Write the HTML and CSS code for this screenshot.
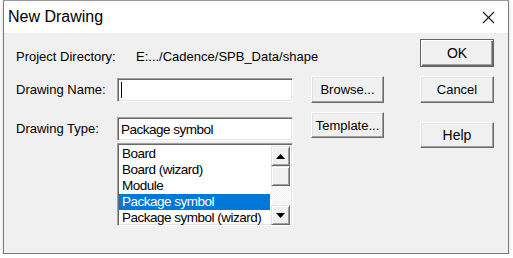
FILE: index.html
```html
<!DOCTYPE html>
<html lang="en">

<head>
    <meta charset="UTF-8">
    <meta name="viewport" content="width=device-width, initial-scale=1.0">
    <title>New Drawing</title>
    <link rel="stylesheet" href="styles.css">
</head>

<body>
    <div class="window">
        <div class="titlebar">
            <span class="title">New Drawing</span>
            <svg class="close" width="13" height="13" viewBox="0 0 13 13">
                <path d="M1 1 L12 12 M12 1 L1 12" stroke="#1a1a1a" stroke-width="1.1" fill="none" />
            </svg>
        </div>
        <div class="content">
            <div class="form">
                <div class="row dir">
                    <span class="label">Project Directory:</span>
                    <span class="value">E:.../Cadence/SPB_Data/shape</span>
                </div>
                <div class="row name">
                    <span class="label">Drawing Name:</span>
                    <div class="field"><span class="caret"></span></div>
                    <button class="btn side">Browse...</button>
                </div>
                <div class="row type">
                    <span class="label">Drawing Type:</span>
                    <div class="field">Package symbol</div>
                    <button class="btn side">Template...</button>
                </div>
                <div class="row list">
                    <div class="listbox">
                        <div class="items">
                            <div class="item">Board</div>
                            <div class="item">Board (wizard)</div>
                            <div class="item">Module</div>
                            <div class="item selected">Package symbol</div>
                            <div class="item">Package symbol (wizard)</div>
                        </div>
                        <div class="scrollbar">
                            <div class="arrow">
                                <svg width="9" height="5" viewBox="0 0 9 5"><path d="M4.5 0 L9 5 L0 5 Z" fill="#000" /></svg>
                            </div>
                            <div class="thumb"></div>
                            <div class="track"></div>
                            <div class="arrow">
                                <svg width="9" height="5" viewBox="0 0 9 5"><path d="M0 0 L9 0 L4.5 5 Z" fill="#000" /></svg>
                            </div>
                        </div>
                    </div>
                </div>
            </div>
            <div class="actions">
                <button class="btn ok">OK</button>
                <button class="btn cancel">Cancel</button>
                <button class="btn help">Help</button>
            </div>
        </div>
    </div>
</body>

</html>
```

FILE: styles.css
```css
body {
    margin: 0;
    background-color: #ffffff;
    font-family: "Liberation Sans", Arial, sans-serif;
}

.window {
    margin-left: 3px;
    width: 506px;
    height: 254px;
    box-sizing: border-box;
    border: 1px solid #7a7a7a;
    border-top-color: #9a9a9a;
    box-shadow: 0 2px 4px rgba(0, 0, 0, 0.18);
    display: flex;
    flex-direction: column;
}

.titlebar {
    height: 32px;
    background-color: #ffffff;
    display: flex;
    align-items: center;
    justify-content: space-between;
    padding-left: 4px;
    padding-right: 13px;
}

.title {
    font-size: 16px;
    color: #000000;
    padding-bottom: 1px;
}

.close {
    margin-top: 1px;
}

.content {
    flex: 1;
    background-color: #f0f0f0;
    display: flex;
    padding-left: 12px;
    font-size: 13px;
    color: #000000;
}

.form {
    width: 368px;
    padding-top: 15px;
}

.row {
    display: flex;
}

.label {
    width: 101px;
    flex-shrink: 0;
}

.dir {
    height: 16px;
    align-items: center;
}

.value {
    margin-left: 19px;
}

.name {
    margin-top: 12px;
    height: 27px;
    align-items: center;
}

.type {
    margin-top: 9px;
    height: 29px;
}

.type .label {
    align-self: flex-end;
    padding-bottom: 5px;
}

.type .field {
    align-self: flex-end;
}

.type .btn {
    align-self: flex-start;
    height: 26px;
}

.field {
    width: 176px;
    height: 24px;
    box-sizing: border-box;
    background-color: #ffffff;
    border: 1px solid;
    border-color: #a0a0a0 #ffffff #ffffff #a0a0a0;
    box-shadow: inset 1px 1px #696969, inset -1px -1px #e3e3e3;
    padding-left: 3px;
    display: flex;
    align-items: center;
    font-size: 13.5px;
    letter-spacing: -0.5px;
}

.caret {
    width: 1px;
    height: 16px;
    background-color: #000000;
    margin-left: 0px;
}

.btn {
    font-family: "Liberation Sans", Arial, sans-serif;
    font-size: 13px;
    color: #000000;
    background-color: #f0f0f0;
    border: 1px solid;
    border-color: #ffffff #696969 #696969 #ffffff;
    box-shadow: inset -1px -1px #a0a0a0, inset 1px 1px #e3e3e3;
    padding: 0;
    box-sizing: border-box;
}

.side {
    width: 73px;
    height: 27px;
    margin-left: 18px;
}

.list {
    margin-top: 2px;
    padding-left: 101px;
}

.listbox {
    width: 176px;
    height: 83px;
    box-sizing: border-box;
    background-color: #ffffff;
    border: 1px solid;
    border-color: #a0a0a0 #ffffff #ffffff #a0a0a0;
    box-shadow: inset 1px 1px #696969, inset -1px -1px #e3e3e3;
    padding: 2px 2px 0 1px;
    display: flex;
    overflow: hidden;
}

.items {
    flex: 1;
    overflow: hidden;
    font-size: 13.5px;
    letter-spacing: -0.5px;
}

.item {
    height: 16px;
    line-height: 16px;
    padding-left: 3px;
    white-space: nowrap;
}

.selected {
    background-color: #0078d7;
    color: #ffffff;
}

.scrollbar {
    width: 19px;
    display: flex;
    flex-direction: column;
    margin-left: 1px;
}

.arrow,
.thumb {
    box-sizing: border-box;
    background-color: #f0f0f0;
    border: 1px solid;
    border-color: #e3e3e3 #696969 #696969 #e3e3e3;
    box-shadow: inset 1px 1px #ffffff, inset -1px -1px #a0a0a0;
    display: flex;
    align-items: center;
    justify-content: center;
}

.arrow {
    height: 20px;
}

.thumb {
    height: 20px;
}

.track {
    flex: 1;
    background-image: repeating-conic-gradient(#f0f0f0 0 25%, #ffffff 0 50%);
    background-size: 2px 2px;
}

.actions {
    margin-left: 36px;
    padding-top: 6px;
    display: flex;
    flex-direction: column;
    width: 74px;
}

.actions .btn {
    width: 74px;
}

.ok {
    height: 28px;
    font-size: 14px;
    border-color: #646464;
    box-shadow: inset 1px 1px #ffffff, inset -1px -1px #696969, inset -2px -2px #a0a0a0;
}

.cancel {
    height: 27px;
    margin-top: 9px;
}

.help {
    height: 26px;
    margin-top: 19px;
    font-size: 14px;
}
```
